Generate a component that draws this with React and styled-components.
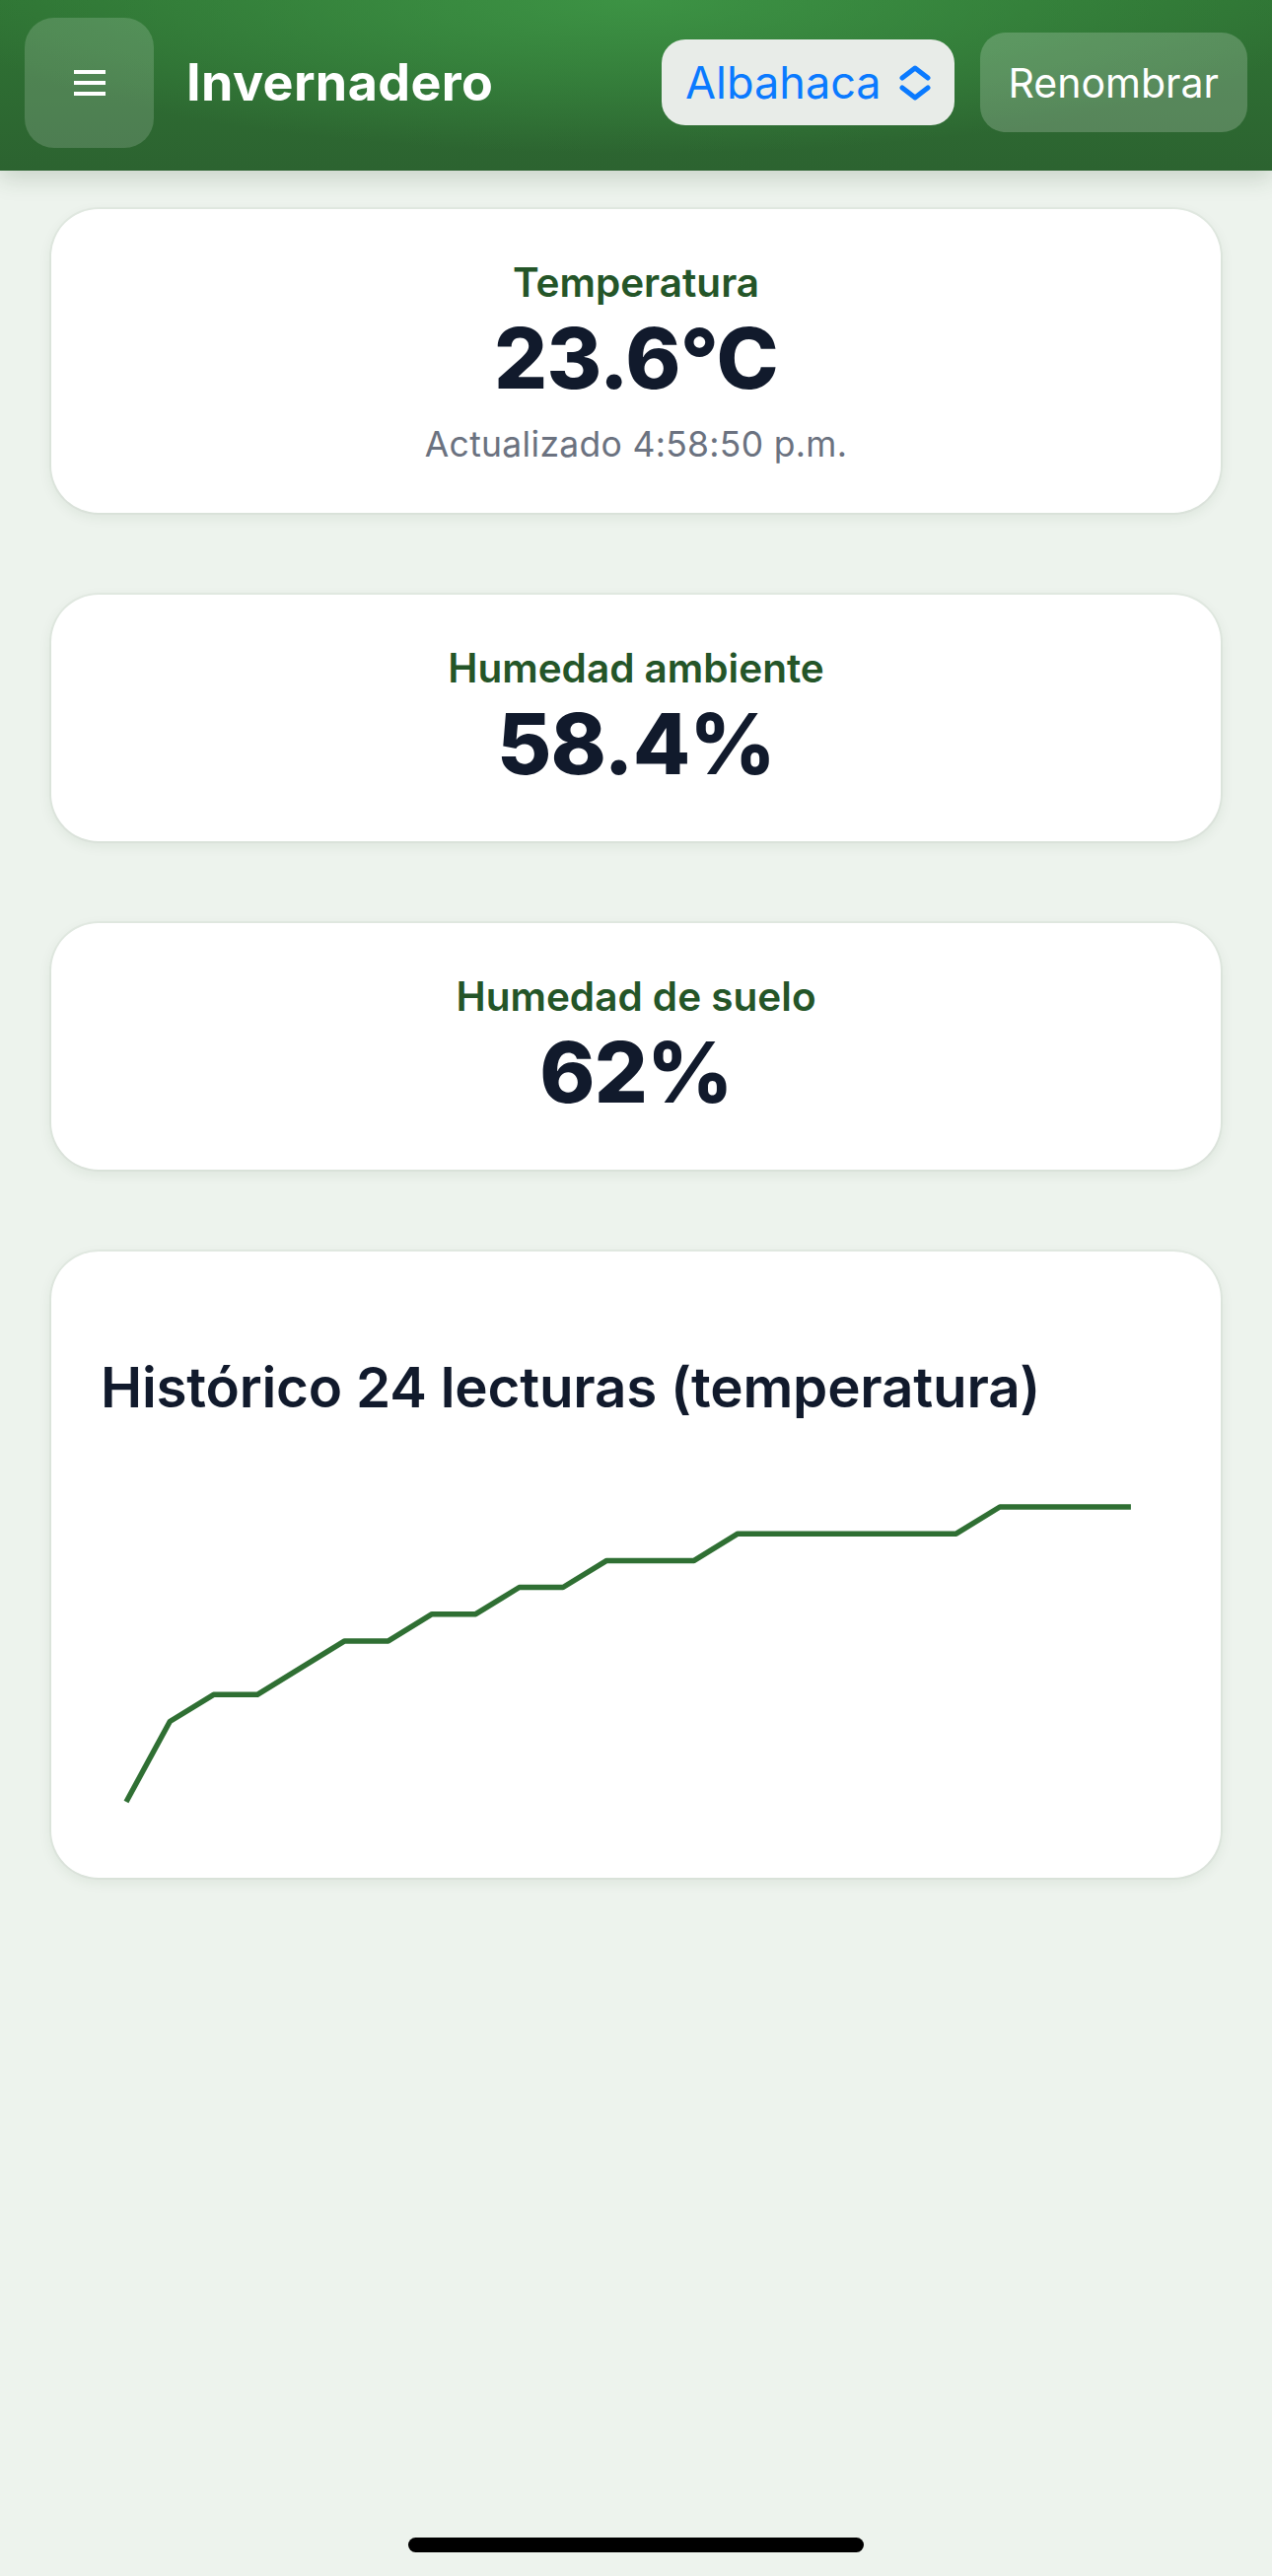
import React from 'react';
import styled, { createGlobalStyle } from 'styled-components';

const GlobalStyle = createGlobalStyle`
  html, body {
    margin: 0;
    padding: 0;
    background: #edf3ed;
  }
  body {
    font-family: Inter, "Noto Sans", "Liberation Sans", sans-serif;
    -webkit-font-smoothing: antialiased;
  }
`

const Page = styled.div`
  position: relative;
  min-height: 2612px;
  background: #edf3ed;
`

const Header = styled.header`
  height: 173px;
  box-sizing: border-box;
  padding: 0 25px 6px 25px;
  display: flex;
  align-items: center;
  background:
    radial-gradient(ellipse 55% 90% at 50% 0%, rgba(62, 150, 70, 0.9) 0%, rgba(62, 150, 70, 0) 100%),
    linear-gradient(180deg, #2f7434 0%, #2c6330 100%);
  box-shadow: 0 8px 22px rgba(40, 70, 40, 0.18);
`

const MenuButton = styled.button`
  width: 131px;
  height: 132px;
  border: none;
  border-radius: 30px;
  background: rgba(255, 255, 255, 0.16);
  display: flex;
  align-items: center;
  justify-content: center;
  padding: 0;
  cursor: pointer;
`

const Title = styled.h1`
  margin: 0 0 0 33px;
  flex: 1;
  font-size: 52px;
  font-weight: 700;
  color: #ffffff;
  letter-spacing: 0.4px;
`

const Picker = styled.div`
  height: 87px;
  box-sizing: border-box;
  padding: 0 24px 0 24px;
  border-radius: 24px;
  background: #e8ece8;
  display: flex;
  align-items: center;
  gap: 18px;
  color: #0a7aff;
  font-size: 45px;
  font-weight: 400;
  font-family: Inter, "Noto Sans", sans-serif;
`

const RenameButton = styled.button`
  margin-left: 26px;
  height: 101px;
  padding: 0 29px;
  border: none;
  border-radius: 26px;
  background: rgba(255, 255, 255, 0.2);
  color: #ffffff;
  font-family: Inter, "Noto Sans", sans-serif;
  font-size: 41px;
  font-weight: 400;
  cursor: pointer;
`

const Main = styled.main`
  padding: 39px 52px 0;
  display: flex;
  flex-direction: column;
  gap: 83px;
`

const Card = styled.section`
  background: #ffffff;
  border-radius: 48px;
  box-shadow: 0 4px 14px rgba(30, 60, 30, 0.08), 0 0 0 2px rgba(30, 60, 30, 0.04);
  padding: ${p => (p.$chart ? '0 50px 48px' : '48px 40px')};
  text-align: ${p => (p.$chart ? 'left' : 'center')};
`

const Label = styled.div`
  font-size: 40.5px;
  line-height: 53px;
  font-weight: 600;
  color: #245528;
`

const Value = styled.div`
  font-size: 85px;
  line-height: 101px;
  font-weight: 800;
  color: #111a2c;
  letter-spacing: -0.8px;
`

const Updated = styled.div`
  margin-top: 15px;
  font-size: 35.5px;
  line-height: 43px;
  color: #6b7280;
  letter-spacing: 0.3px;
`

const ChartTitle = styled.h3`
  margin: 104px 0 0;
  font-size: 56.5px;
  line-height: 67px;
  font-weight: 600;
  color: #111a2c;
  letter-spacing: -0.2px;
`

const ChartBox = styled.svg`
  display: block;
  margin-top: 16px;
  width: 100%;
  height: 400px;
`

const HomeIndicator = styled.div`
  position: absolute;
  left: 414px;
  bottom: 24px;
  width: 462px;
  height: 15px;
  border-radius: 8px;
  background: #000000;
`

const readings = [
  22.5, 22.8, 22.9, 22.9, 23.0, 23.1, 23.1, 23.2, 23.2, 23.3, 23.3, 23.4,
  23.4, 23.4, 23.5, 23.5, 23.5, 23.5, 23.5, 23.5, 23.6, 23.6, 23.6, 23.6,
];

function HistoryChart() {
  const x0 = 26;
  const step = 44.3;
  const top = 72;
  const bottom = 371;
  const min = Math.min(...readings);
  const max = Math.max(...readings);
  const pts = readings
    .map((v, i) => {
      const x = x0 + i * step;
      const y = bottom - ((v - min) / (max - min)) * (bottom - top);
      return `${x.toFixed(1)},${y.toFixed(1)}`;
    })
    .join(' ');
  return (
    <ChartBox viewBox="0 0 1086 400">
      <polyline points={pts} fill="none" stroke="#2f6f33" strokeWidth="5.5" strokeLinejoin="round" />
    </ChartBox>
  );
}

function MenuIcon() {
  return (
    <svg width="32" height="26" viewBox="0 0 32 26">
      <rect x="0" y="0" width="32" height="4" fill="#fff" />
      <rect x="0" y="11" width="32" height="4" fill="#fff" />
      <rect x="0" y="22" width="32" height="4" fill="#fff" />
    </svg>
  );
}

function UpDownIcon() {
  return (
    <svg width="32" height="36" viewBox="0 0 32 36" fill="none" stroke="#0a7aff" strokeWidth="5" strokeLinecap="round" strokeLinejoin="round">
      <polyline points="3,13 16,3 29,13" />
      <polyline points="3,23 16,33 29,23" />
    </svg>
  );
}

function StatCard({ label, value, updated }) {
  return (
    <Card>
      <Label>{label}</Label>
      <Value>{value}</Value>
      {updated && <Updated>{updated}</Updated>}
    </Card>
  );
}

export default function App() {
  return (
    <Page>
      <GlobalStyle />
      <Header>
        <MenuButton aria-label="Menú">
          <MenuIcon />
        </MenuButton>
        <Title>Invernadero</Title>
        <Picker>
          <span>Albahaca</span>
          <UpDownIcon />
        </Picker>
        <RenameButton>Renombrar</RenameButton>
      </Header>
      <Main>
        <StatCard label="Temperatura" value="23.6°C" updated="Actualizado 4:58:50 p.m." />
        <StatCard label="Humedad ambiente" value="58.4%" />
        <StatCard label="Humedad de suelo" value="62%" />
        <Card $chart>
          <ChartTitle>Histórico 24 lecturas (temperatura)</ChartTitle>
          <HistoryChart />
        </Card>
      </Main>
      <HomeIndicator />
    </Page>
  );
}
